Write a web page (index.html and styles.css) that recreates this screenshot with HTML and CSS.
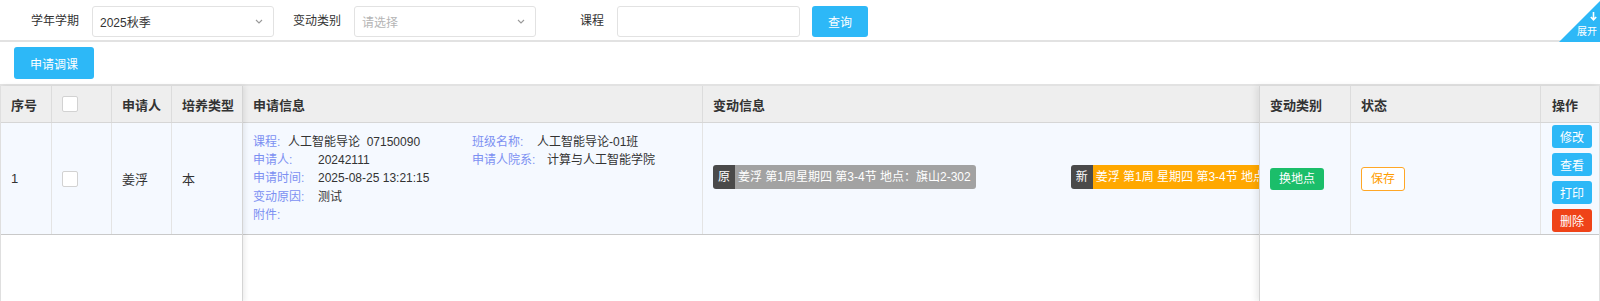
FILE: index.html
```html
<!DOCTYPE html>
<html lang="zh-CN">
<head>
  <meta charset="UTF-8" />
  <meta name="viewport" content="width=device-width, initial-scale=1.0"/>
  <title>调课申请</title>
  <link rel="stylesheet" href="styles.css">
</head>
<body>
  <div class="search-bar">
    <span class="search-label label-term">学年学期</span>
    <div class="select select-term">
      <span>2025秋季</span>
      <svg class="caret" width="8" height="5" viewBox="0 0 8 5"><polyline points="1,1 4,4 7,1" fill="none" stroke="#999" stroke-width="1.1"/></svg>
    </div>
    <span class="search-label label-type">变动类别</span>
    <div class="select select-type">
      <span class="placeholder">请选择</span>
      <svg class="caret" width="8" height="5" viewBox="0 0 8 5"><polyline points="1,1 4,4 7,1" fill="none" stroke="#999" stroke-width="1.1"/></svg>
    </div>
    <span class="search-label label-course">课程</span>
    <input class="search-input" type="text" />
    <button class="btn btn-search">查询</button>

    <div class="expand-corner">
      <svg width="7" height="9" viewBox="0 0 7 9"><path d="M3.5 0 V8 M0.8 5 L3.5 7.8 L6.2 5" fill="none" stroke="#fff" stroke-width="1.6"/></svg>
      <span>展开</span>
    </div>
  </div>

  <div class="toolbar">
    <button class="btn btn-apply">申请调课</button>
  </div>

  <div class="grid">
    <div class="grid-left">
      <div class="grid-head">
        <div class="cell col-no">序号</div>
        <div class="cell col-check"><span class="checkbox"></span></div>
        <div class="cell col-name">申请人</div>
        <div class="cell col-kind">培养类型</div>
      </div>
      <div class="grid-row">
        <div class="cell col-no">1</div>
        <div class="cell col-check"><span class="checkbox"></span></div>
        <div class="cell col-name">姜浮</div>
        <div class="cell col-kind">本</div>
      </div>
    </div>

    <div class="grid-main">
      <div class="grid-head">
        <div class="cell col-info">申请信息</div>
        <div class="cell col-change">变动信息</div>
      </div>
      <div class="grid-row">
        <div class="cell col-info">
          <div class="apply-info">
            <div class="info-col info-left">
              <div><span class="info-label w-course">课程:</span>人工智能导论&nbsp;&nbsp;07150090</div>
              <div><span class="info-label">申请人:</span>20242111</div>
              <div><span class="info-label">申请时间:</span>2025-08-25 13:21:15</div>
              <div><span class="info-label">变动原因:</span>测试</div>
              <div><span class="info-label">附件:</span></div>
            </div>
            <div class="info-col">
              <div><span class="info-label">班级名称:</span>人工智能导论-01班</div>
              <div><span class="info-label w-dept">申请人院系:</span>计算与人工智能学院</div>
              <div>&nbsp;</div>
              <div>&nbsp;</div>
              <div>&nbsp;</div>
            </div>
          </div>
        </div>
        <div class="cell col-change">
          <span class="change-tag tag-old"><span class="tag-mark">原</span><span class="tag-body">姜浮 第1周星期四 第3-4节 地点：旗山2-302</span></span>
          <span class="change-tag tag-new"><span class="tag-mark">新</span><span class="tag-body">姜浮 第1周 星期四 第3-4节 地点：旗山2-305</span></span>
        </div>
      </div>
    </div>

    <div class="grid-right">
      <div class="grid-head">
        <div class="cell col-type">变动类别</div>
        <div class="cell col-status">状态</div>
        <div class="cell col-op">操作</div>
      </div>
      <div class="grid-row">
        <div class="cell col-type"><span class="type-tag">换地点</span></div>
        <div class="cell col-status"><span class="status-tag">保存</span></div>
        <div class="cell col-op">
          <div class="op-list">
            <button class="btn btn-op">修改</button>
            <button class="btn btn-op">查看</button>
            <button class="btn btn-op">打印</button>
            <button class="btn btn-op btn-danger">删除</button>
          </div>
        </div>
      </div>
    </div>
  </div>
</body>
</html>
```

FILE: styles.css
```css
body { margin: 0; background: #fff; color: #333; font-size: 12px; font-family: "Liberation Sans", "Noto Sans CJK SC", sans-serif; }

/* search bar */
.search-bar {
  position: relative; display: flex; align-items: flex-start;
  height: 42px; padding-top: 6px; box-sizing: border-box;
  border-bottom: 2px solid #e2e2e2;
}
.search-label { line-height: 31px; font-size: 12px; color: #333; }
.label-term { margin-left: 31px; }
.label-type { margin-left: 19px; }
.label-course { margin-left: 44px; }
.select {
  display: flex; align-items: center; justify-content: space-between;
  width: 182px; height: 31px; box-sizing: border-box; margin-left: 13px;
  padding: 0 10px 0 7px; border: 1px solid #e2e2e2; border-radius: 3px;
  font-size: 12px; color: #333;
}
.select .placeholder { color: #b5b5b5; }
.search-input {
  width: 183px; height: 31px; box-sizing: border-box; margin: 0 0 0 13px;
  border: 1px solid #e2e2e2; border-radius: 3px; outline: none;
}
.btn {
  border: none; border-radius: 3px; background: #2db8f7; color: #fff;
  font-size: 12px; font-family: inherit; cursor: pointer; padding: 0;
}
.btn-search { width: 56px; height: 31px; margin-left: 12px; }

.expand-corner {
  position: absolute; top: 1px; right: 0; width: 41px; height: 41px;
  box-sizing: border-box; padding: 11px 3px 0 0;
  display: flex; flex-direction: column; align-items: flex-end;
  background: #2db8f7; color: #fff;
  clip-path: polygon(100% 0, 100% 100%, 0 100%);
}
.expand-corner span { font-size: 10px; line-height: 10px; margin-top: 6px; }

/* toolbar */
.toolbar { height: 42px; padding: 5px 14px; box-sizing: border-box; }
.btn-apply { width: 80px; height: 32px; }

/* grid */
.grid {
  display: flex; height: 216px;
  border: 1px solid #e2e2e2; border-top-width: 2px;
}
.grid-head { display: flex; height: 37px; background: #eeeeee; border-bottom: 1px solid #d6d6d6; box-sizing: border-box; }
.grid-row { display: flex; height: 112px; background: #f5f9ff; border-bottom: 1px solid #c9c9c9; box-sizing: border-box; }
.cell {
  display: flex; align-items: center; flex-shrink: 0; white-space: nowrap;
  padding: 0 10px; box-sizing: border-box; border-right: 1px solid #e4e4e4;
  font-size: 13px;
}
.grid-head .cell { font-weight: bold; color: #333; border-right-color: #dcdcdc; }

.grid-left {
  position: relative; z-index: 2; width: 241px; flex-shrink: 0;
  background: #fff; border-right: 1px solid #d4d4d4;
  box-shadow: 2px 0 5px rgba(0, 0, 0, 0.08);
}
.grid-right {
  position: relative; z-index: 2; width: 340px; flex-shrink: 0; box-sizing: border-box;
  background: #fff; border-left: 1px solid #d4d4d4;
  box-shadow: -3px 0 6px rgba(0, 0, 0, 0.08);
}
.grid-main { flex: 1; overflow: hidden; }
.grid-main .grid-head, .grid-main .grid-row { width: 1400px; }

.col-no { width: 51px; }
.col-check { width: 60px; }
.col-name { width: 60px; }
.col-kind { width: 70px; border-right: none; padding-right: 0; }
.col-info { width: 460px; }
.col-change { width: 940px; }
.col-type { width: 91px; }
.col-status { width: 190px; }
.col-op { width: 58px; border-right: none; padding-left: 11px; }

.checkbox {
  display: inline-block; width: 16px; height: 16px; box-sizing: border-box;
  background: #fff; border: 1px solid #d2d2d2; border-radius: 2px;
}

/* apply info */
.apply-info { display: flex; font-size: 12px; line-height: 18.2px; color: #333; }
.info-left { width: 219px; }
.info-label { display: inline-block; width: 65px; color: #7c90f2; }
.info-label.w-course { width: 35px; }
.info-label.w-dept { width: 75px; }

/* change tags */
.grid-row .col-change { align-items: flex-start; padding-top: 42px; }
.change-tag {
  display: inline-flex; height: 24px; line-height: 24px; font-size: 12px;
  color: #fff; border-radius: 3px; overflow: hidden; white-space: nowrap;
}
.tag-mark { width: 22px; text-align: center; background: #4a4a4a; }
.tag-body { padding: 0 5px 0 3px; background: #a2a2a2; }
.tag-new { margin-left: 95px; }
.tag-new .tag-body { background: #ffa800; }

.type-tag {
  display: inline-block; height: 22px; line-height: 22px; padding: 0 9px;
  background: #1bbe6a; color: #fff; font-size: 12px; border-radius: 3px;
}
.status-tag {
  display: inline-block; height: 24px; line-height: 22px; padding: 0 9px; box-sizing: border-box;
  background: #fff; color: #ff9d00; border: 1px solid #ffa726; font-size: 12px; border-radius: 3px;
}

.op-list { display: flex; flex-direction: column; gap: 4.5px; }
.btn-op { width: 40px; height: 23.5px; }
.btn-danger { background: #ef4318; }
```
